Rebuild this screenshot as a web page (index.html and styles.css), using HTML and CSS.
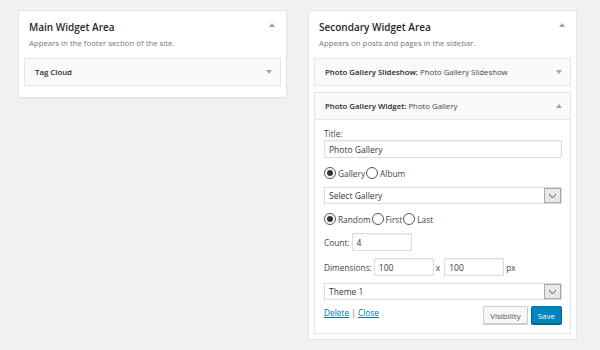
FILE: index.html
```html
<!DOCTYPE html>
<html lang="en">
<head>
    <meta charset="UTF-8">
    <title>Widgets</title>
    <link rel="stylesheet" href="styles.css">
</head>
<body>
    <div class="areas">
        <div class="sidebar">
            <div class="sidebar-head">
                <h2>Main Widget Area</h2>
                <span class="arrow up"></span>
            </div>
            <p class="sidebar-desc">Appears in the footer section of the site.</p>
            <div class="widget">
                <div class="widget-top">
                    <span class="widget-title"><b>Tag Cloud</b></span>
                    <span class="arrow down"></span>
                </div>
            </div>
        </div>

        <div class="sidebar">
            <div class="sidebar-head">
                <h2>Secondary Widget Area</h2>
                <span class="arrow up"></span>
            </div>
            <p class="sidebar-desc">Appears on posts and pages in the sidebar.</p>
            <div class="widget">
                <div class="widget-top">
                    <span class="widget-title"><b>Photo Gallery Slideshow:</b> Photo Gallery Slideshow</span>
                    <span class="arrow down"></span>
                </div>
            </div>
            <div class="widget open">
                <div class="widget-top">
                    <span class="widget-title"><b>Photo Gallery Widget:</b> Photo Gallery</span>
                    <span class="arrow up"></span>
                </div>
                <div class="widget-inside">
                    <label class="field-label" for="title">Title:</label>
                    <input class="text-input wide" id="title" type="text" value="Photo Gallery">

                    <div class="radio-row">
                        <label><input type="radio" name="type" checked>Gallery</label>
                        <label><input type="radio" name="type">Album</label>
                    </div>

                    <div class="select">
                        <span>Select Gallery</span>
                        <span class="select-btn">
                            <svg width="9" height="6" viewBox="0 0 9 6"><path d="M1 1l3.5 4L8 1" fill="none" stroke="#555" stroke-width="1"/></svg>
                        </span>
                    </div>

                    <div class="radio-row">
                        <label><input type="radio" name="order" checked>Random</label>
                        <label><input type="radio" name="order">First</label>
                        <label><input type="radio" name="order">Last</label>
                    </div>

                    <div class="inline-row">
                        <span>Count:</span>
                        <input class="text-input count" type="text" value="4">
                    </div>

                    <div class="inline-row dims">
                        <span>Dimensions:</span>
                        <input class="text-input dim" type="text" value="100">
                        <span class="sep">x</span>
                        <input class="text-input dim" type="text" value="100">
                        <span class="unit">px</span>
                    </div>

                    <div class="select">
                        <span>Theme 1</span>
                        <span class="select-btn">
                            <svg width="9" height="6" viewBox="0 0 9 6"><path d="M1 1l3.5 4L8 1" fill="none" stroke="#555" stroke-width="1"/></svg>
                        </span>
                    </div>

                    <div class="widget-actions">
                        <div class="links">
                            <a href="#">Delete</a> | <a href="#">Close</a>
                        </div>
                        <div class="buttons">
                            <button class="btn">Visibility</button>
                            <button class="btn primary">Save</button>
                        </div>
                    </div>
                </div>
            </div>
        </div>
    </div>
</body>
</html>
```

FILE: styles.css
```css
* {
    margin: 0;
    padding: 0;
    box-sizing: border-box;
    font-family: 'Open Sans', 'Noto Sans', sans-serif;
}
body {
    background-color: #f1f1f1;
    color: #444;
    padding: 10px 0 0 18px;
}
.areas {
    display: flex;
    align-items: flex-start;
    gap: 21px;
}
.sidebar {
    width: 269px;
    background-color: #fff;
    border: 1px solid #e5e5e5;
    box-shadow: 0 1px 1px rgba(0, 0, 0, 0.04);
    padding: 0 5px 5px;
}
.sidebar-head {
    display: flex;
    justify-content: space-between;
    align-items: flex-start;
    padding: 9px 6px 0 5px;
}
.sidebar-head h2 {
    font-size: 10px;
    font-weight: 600;
    color: #23282d;
    line-height: 14px;
}
.sidebar-head .arrow {
    margin-top: 3px;
}
.sidebar-desc {
    font-size: 7.8px;
    color: #72777c;
    padding: 3px 0 0 5px;
    line-height: 12px;
    margin-bottom: 9px;
}
.arrow {
    width: 0;
    height: 0;
    border-left: 3.5px solid transparent;
    border-right: 3.5px solid transparent;
}
.arrow.up {
    border-bottom: 4px solid #a0a5aa;
}
.arrow.down {
    border-top: 4px solid #a0a5aa;
}
.widget {
    border: 1px solid #e5e5e5;
    background-color: #fafafa;
    margin-bottom: 6px;
}
.widget.open {
    margin-bottom: 0;
}
.widget-top {
    display: flex;
    justify-content: space-between;
    align-items: center;
    height: 26px;
    padding: 0 8px 0 10px;
}
.widget-title {
    font-size: 7.8px;
    color: #444;
}
.widget-title b {
    font-weight: 600;
    color: #23282d;
}
.widget-inside {
    background-color: #fff;
    border-top: 1px solid #e5e5e5;
    padding: 8px 8px 9px 9px;
    font-size: 8.3px;
    color: #444;
}
.field-label {
    display: block;
    line-height: 11px;
    margin-bottom: 1px;
}
.text-input {
    height: 18px;
    border: 1px solid #ddd;
    box-shadow: inset 0 1px 2px rgba(0, 0, 0, 0.07);
    font-size: 8.5px;
    color: #32373c;
    padding: 0 4px;
    outline: none;
}
.text-input.wide {
    width: 238px;
    display: block;
}
.radio-row {
    display: flex;
    align-items: center;
    height: 14px;
    margin: 8px 0 7px;
}
.radio-row label {
    display: flex;
    align-items: center;
    gap: 2px;
    margin-right: 1px;
}
.radio-row input {
    appearance: none;
    width: 12px;
    height: 12px;
    border: 1px solid #555;
    border-radius: 50%;
    display: flex;
    align-items: center;
    justify-content: center;
}
.radio-row input:checked::before {
    content: '';
    width: 6px;
    height: 6px;
    border-radius: 50%;
    background-color: #333;
}
.select {
    width: 238px;
    height: 17px;
    border: 1px solid #ddd;
    display: flex;
    justify-content: space-between;
    align-items: center;
    padding-left: 4px;
    font-size: 8.5px;
    color: #32373c;
}
.select-btn {
    width: 17px;
    height: 15px;
    background-color: #e9e9e9;
    border: 1px solid #a9a9a9;
    display: flex;
    align-items: center;
    justify-content: center;
}
.inline-row {
    display: flex;
    align-items: center;
    margin-bottom: 7px;
}
.inline-row span {
    margin-right: 2px;
}
.text-input.count {
    width: 60px;
}
.text-input.dim {
    width: 60px;
}
.dims .sep {
    margin: 0 4px 0 2px;
}
.dims .unit {
    margin-left: 2px;
}
.widget-actions {
    display: flex;
    justify-content: space-between;
    align-items: flex-start;
    margin-top: 6px;
}
.links {
    padding-top: 1px;
    color: #72777c;
}
.links a {
    color: #0073aa;
}
.buttons {
    display: flex;
    gap: 3px;
}
.btn {
    height: 18px;
    padding: 0 6px;
    font-size: 8px;
    border: 1px solid #ccc;
    background-color: #f7f7f7;
    color: #555;
    border-radius: 2px;
    box-shadow: 0 1px 0 #ccc;
}
.btn.primary {
    background-color: #0085ba;
    border-color: #0073aa #006799 #006799;
    color: #fff;
    box-shadow: 0 1px 0 #006799;
}
```
